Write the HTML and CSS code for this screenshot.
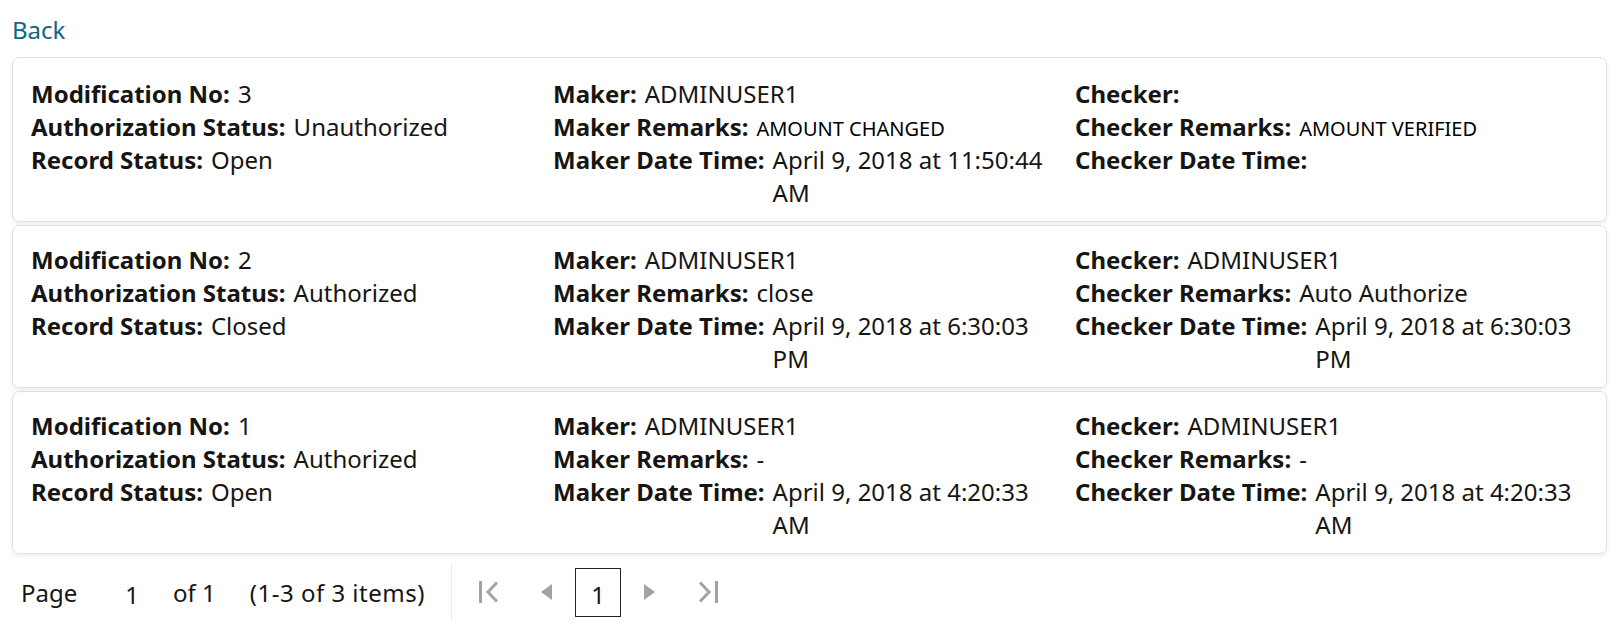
FILE: index.html
```html
<!DOCTYPE html>
<html>
<head>
<meta charset="utf-8">
<link rel="stylesheet" href="styles.css">
</head>
<body>
<div class="page">
  <a class="back" href="#">Back</a>
  <div class="list">
    <div class="card">
      <div class="col">
        <div class="row"><span class="lbl">Modification No:</span><span class="val">3</span></div>
        <div class="row"><span class="lbl">Authorization Status:</span><span class="val">Unauthorized</span></div>
        <div class="row"><span class="lbl">Record Status:</span><span class="val">Open</span></div>
      </div>
      <div class="col">
        <div class="row"><span class="lbl">Maker:</span><span class="val">ADMINUSER1</span></div>
        <div class="row"><span class="lbl">Maker Remarks:</span><span class="val small">AMOUNT CHANGED</span></div>
        <div class="row"><span class="lbl">Maker Date Time:</span><span class="val">April 9, 2018 at 11:50:44 AM</span></div>
      </div>
      <div class="col">
        <div class="row"><span class="lbl">Checker:</span><span class="val"></span></div>
        <div class="row"><span class="lbl">Checker Remarks:</span><span class="val small">AMOUNT VERIFIED</span></div>
        <div class="row"><span class="lbl">Checker Date Time:</span><span class="val"></span></div>
      </div>
    </div>
    <div class="card">
      <div class="col">
        <div class="row"><span class="lbl">Modification No:</span><span class="val">2</span></div>
        <div class="row"><span class="lbl">Authorization Status:</span><span class="val">Authorized</span></div>
        <div class="row"><span class="lbl">Record Status:</span><span class="val">Closed</span></div>
      </div>
      <div class="col">
        <div class="row"><span class="lbl">Maker:</span><span class="val">ADMINUSER1</span></div>
        <div class="row"><span class="lbl">Maker Remarks:</span><span class="val">close</span></div>
        <div class="row"><span class="lbl">Maker Date Time:</span><span class="val">April 9, 2018 at 6:30:03 PM</span></div>
      </div>
      <div class="col">
        <div class="row"><span class="lbl">Checker:</span><span class="val">ADMINUSER1</span></div>
        <div class="row"><span class="lbl">Checker Remarks:</span><span class="val">Auto Authorize</span></div>
        <div class="row"><span class="lbl">Checker Date Time:</span><span class="val">April 9, 2018 at 6:30:03 PM</span></div>
      </div>
    </div>
    <div class="card">
      <div class="col">
        <div class="row"><span class="lbl">Modification No:</span><span class="val">1</span></div>
        <div class="row"><span class="lbl">Authorization Status:</span><span class="val">Authorized</span></div>
        <div class="row"><span class="lbl">Record Status:</span><span class="val">Open</span></div>
      </div>
      <div class="col">
        <div class="row"><span class="lbl">Maker:</span><span class="val">ADMINUSER1</span></div>
        <div class="row"><span class="lbl">Maker Remarks:</span><span class="val">-</span></div>
        <div class="row"><span class="lbl">Maker Date Time:</span><span class="val">April 9, 2018 at 4:20:33 AM</span></div>
      </div>
      <div class="col">
        <div class="row"><span class="lbl">Checker:</span><span class="val">ADMINUSER1</span></div>
        <div class="row"><span class="lbl">Checker Remarks:</span><span class="val">-</span></div>
        <div class="row"><span class="lbl">Checker Date Time:</span><span class="val">April 9, 2018 at 4:20:33 AM</span></div>
      </div>
    </div>
  </div>
  <div class="pager">
    <div class="pinfo">
      <span class="ptxt">Page</span>
      <span class="pinput">1</span>
      <span class="ptxt ofn">of 1</span>
      <span class="ptxt items">(1-3 of 3 items)</span>
    </div>
    <div class="pnav">
      <svg class="ico first" width="22" height="22" viewBox="0 0 22 22"><rect x="1" y="0" width="3" height="22" fill="#a3a3a3"/><path d="M19 1.5 L10 11 L19 20.5" fill="none" stroke="#a3a3a3" stroke-width="3"/></svg>
      <svg class="ico prev" width="11" height="16" viewBox="0 0 11 16"><path d="M11 0 L0 8 L11 16 Z" fill="#a3a3a3"/></svg>
      <span class="pbox">1</span>
      <svg class="ico next" width="11" height="16" viewBox="0 0 11 16"><path d="M0 0 L11 8 L0 16 Z" fill="#a3a3a3"/></svg>
      <svg class="ico last" width="22" height="22" viewBox="0 0 22 22"><path d="M2 1.5 L11 11 L2 20.5" fill="none" stroke="#a3a3a3" stroke-width="3"/><rect x="17" y="0" width="3" height="22" fill="#a3a3a3"/></svg>
    </div>
  </div>
</div>
</body>
</html>
```
FILE: styles.css
```css
html, body {
  margin: 0;
  padding: 0;
  background: #fff;
}
body {
  font-family: "Noto Sans", "Liberation Sans", sans-serif;
  color: #161513;
  font-size: 24px;
}
.page {
  padding: 15px 12px 0 12px;
}
.back {
  display: block;
  color: #0f6685;
  text-decoration: none;
  font-size: 24px;
  line-height: 30px;
  height: 42px;
}
.list {
  display: flex;
  flex-direction: column;
  gap: 3px;
}
.card {
  display: grid;
  grid-template-columns: 1fr 1fr 1fr;
  padding: 17px 9px 12px 18px;
  border: 1px solid #dde2e8;
  border-radius: 7px;
  box-shadow: 0 2px 4px rgba(0,0,0,0.08);
  min-height: 132px;
}
.card:first-child {
  padding-top: 19px;
}
.col {
  padding-right: 10px;
}
.row {
  display: flex;
  align-items: baseline;
  line-height: 33px;
  font-size: 24px;
}
.lbl {
  font-weight: 700;
  white-space: nowrap;
  margin-right: 8px;
}
.val {
  flex: 0 1 auto;
}
.val.small {
  font-size: 20px;
  line-height: 20px;
  color: #000;
}
.pager {
  display: flex;
  align-items: center;
  height: 60px;
  margin-top: 8px;
}
.pinfo {
  display: flex;
  align-items: center;
  padding-left: 9px;
  height: 58px;
  width: 430px;
  border-right: 1px solid #ececec;
}
.ptxt {
  font-size: 24px;
}
.pinput {
  font-size: 24px;
  margin: 5px 0 0 48px;
}
.ofn {
  margin-left: 34px;
}
.items {
  margin-left: 34px;
  letter-spacing: 0.5px;
}
.pnav {
  display: flex;
  align-items: center;
}
.ico {
  display: block;
}
.first {
  margin-left: 26px;
}
.prev {
  margin-left: 41px;
}
.pbox {
  box-sizing: border-box;
  width: 46px;
  height: 49px;
  border: 1px solid #222;
  display: flex;
  align-items: center;
  justify-content: center;
  font-size: 24px;
  padding-top: 4px;
  margin-left: 23px;
}
.next {
  margin-left: 23px;
}
.last {
  margin-left: 43px;
}
```
